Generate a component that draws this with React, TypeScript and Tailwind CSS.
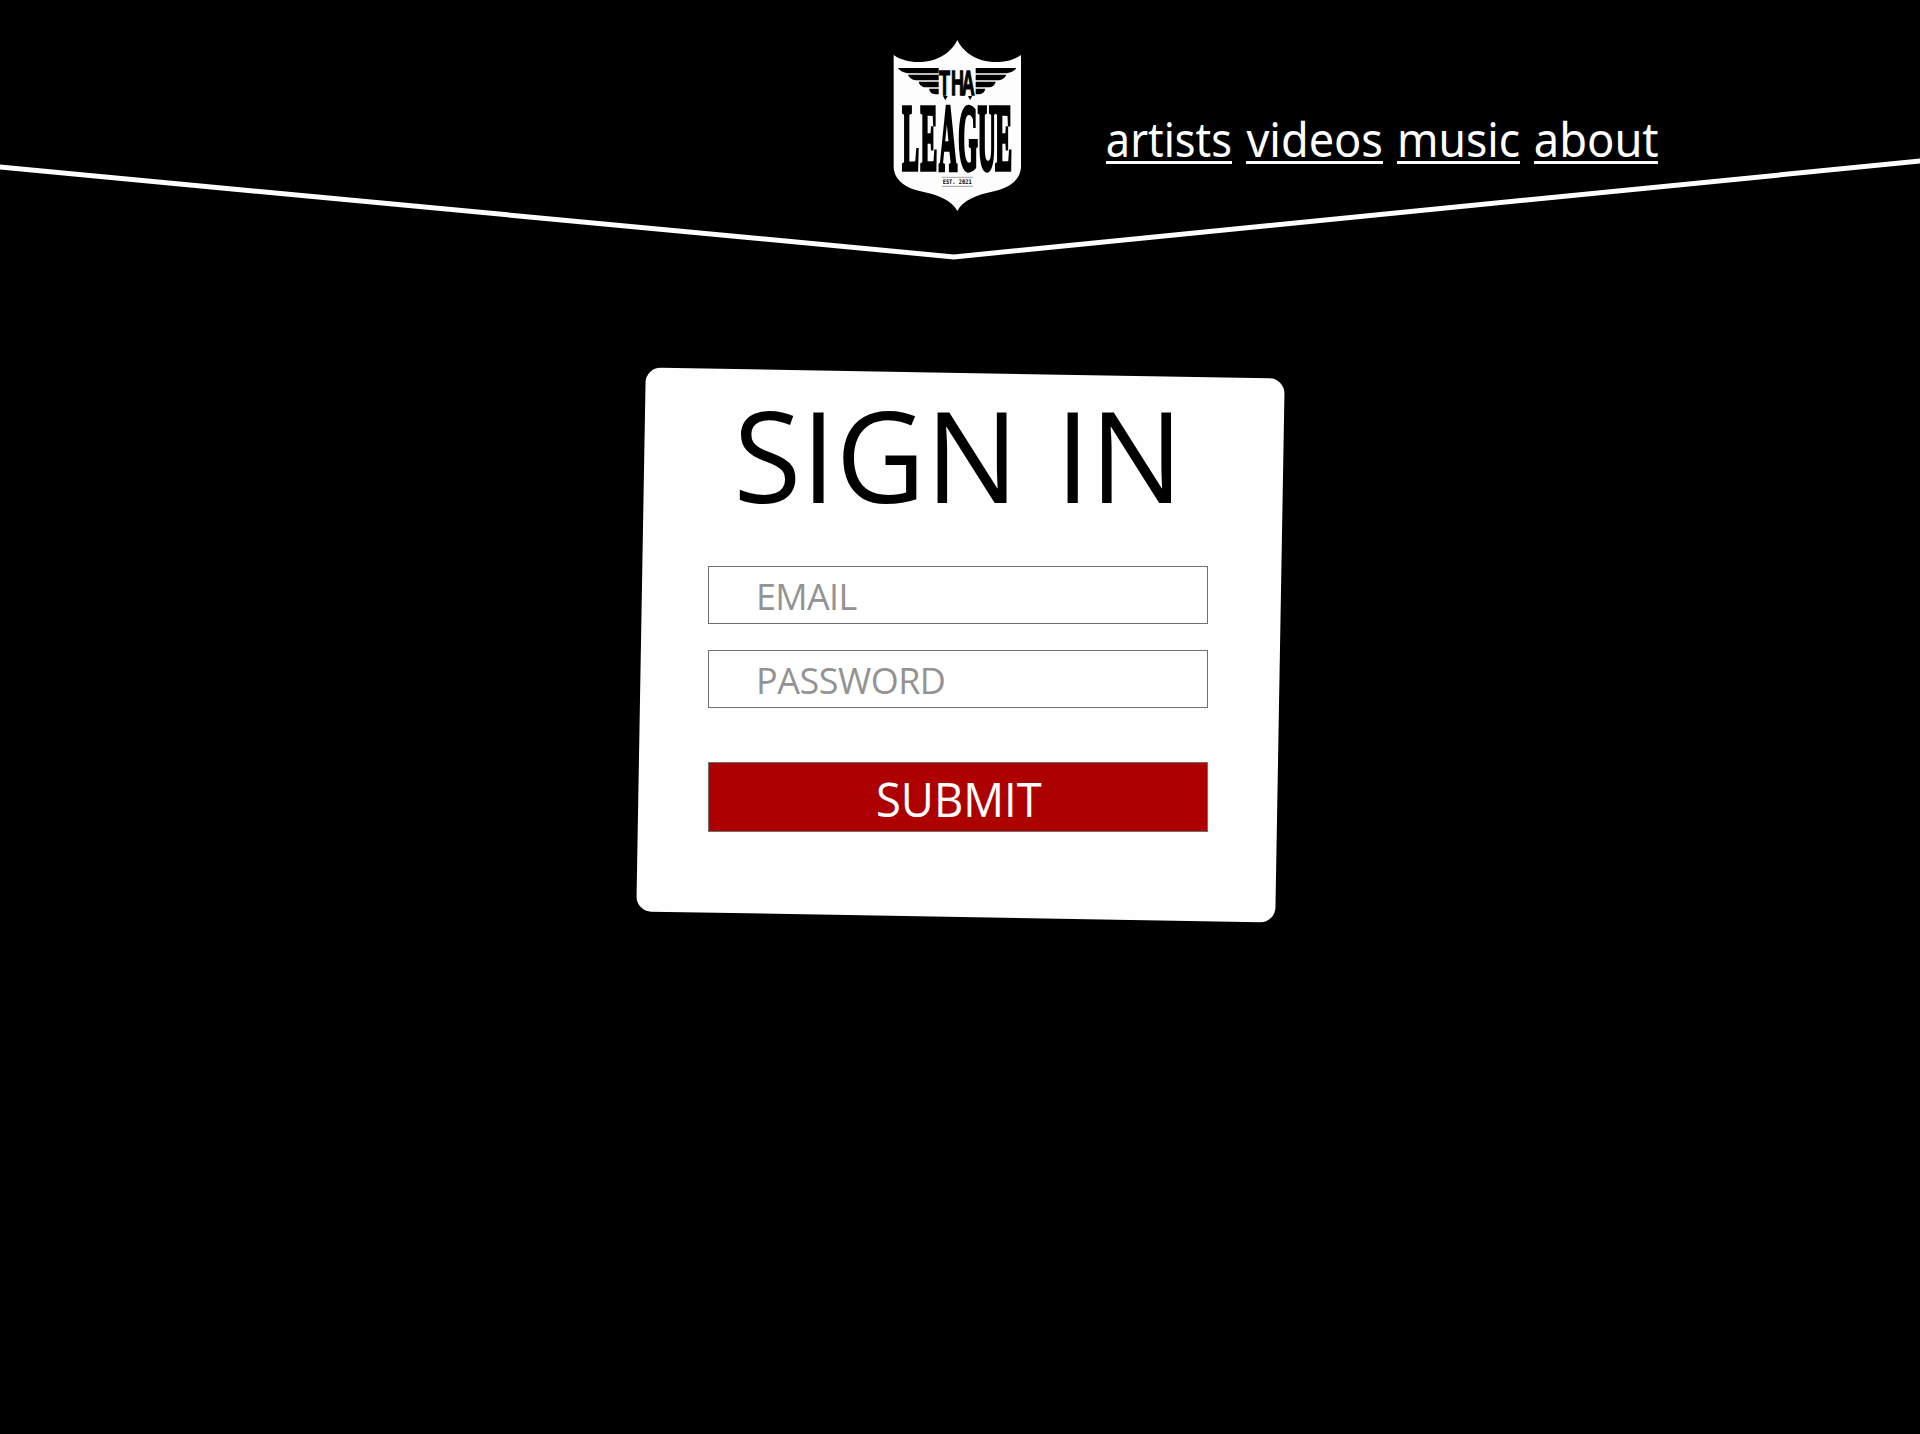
const LINKS = [
  { label: "artists", box: "w-[126px]", text: "scale-x-[0.902]" },
  { label: "videos", box: "ml-[14px] w-[137px]", text: "scale-x-[0.939]" },
  { label: "music", box: "ml-[14px] w-[123px]", text: "scale-x-[0.925]" },
  { label: "about", box: "ml-[14px] w-[124px]", text: "scale-x-[0.943]" },
];

function Wing() {
  return (
    <g fill="#000">
      <path d="M54 114H176V130H90C76 130 60 124 54 114Z" />
      <path d="M84 134H176V151H112C98 151 88 144 84 134Z" />
      <path d="M116 155H176V172H138C126 172 118 165 116 155Z" />
      <path d="M147 176H176V193H166C155 192 149 186 147 176Z" />
    </g>
  );
}

function Logo() {
  return (
    <svg className="h-[190px] w-[160px]" viewBox="0 0 480 570" role="img" aria-label="Tha League">
      <path
        fill="#fdfdfd"
        d="M232 30C216 64 176 96 116 96C84 96 58 88 41 75V412C43 450 76 474 122 484C174 494 216 512 232 543C248 512 290 494 342 484C388 474 421 450 423 412V75C406 88 380 96 348 96C288 96 248 64 232 30Z"
      />
      <Wing />
      <g transform="translate(463 0) scale(-1 1)">
        <Wing />
      </g>
      <g fill="#000" stroke="#000" fontWeight="700">
        <text transform="translate(180 196) scale(0.5 1)" x="-6 66 130" fontFamily="'Liberation Sans', sans-serif" fontSize="108" strokeWidth="4">
          THA
        </text>
        <text
          transform="translate(0 416) scale(0.272 1)"
          x="246 446 650 862 1078 1272"
          fontFamily="'Liberation Serif', serif"
          fontSize="277"
          strokeWidth="16"
        >
          LEAGUE
        </text>
      </g>
      <path fill="#000" d="M189 198H203L196 211ZM264 198H277L270 210Z" />
      <path d="M186 442H279M186 469H279" stroke="#777" strokeWidth="2" />
      <text
        x="188"
        y="463"
        textLength="87"
        lengthAdjust="spacingAndGlyphs"
        fontFamily="'DejaVu Sans Mono', monospace"
        fontWeight="700"
        fontSize="19"
      >
        EST. 2021
      </text>
    </svg>
  );
}

export default function App() {
  return (
    <div className="flex min-h-[1434px] w-full flex-col overflow-hidden bg-black font-['Open_Sans',sans-serif]">
      <header className="relative flex h-[260px] shrink-0 items-start pl-[880px]">
        <svg className="absolute inset-0 h-[270px] w-[1920px]" viewBox="0 0 1920 270" fill="none" aria-hidden="true">
          <path d="M-10 166.1L954 256.9L1930 160" stroke="#fff" strokeWidth="5" />
        </svg>
        <div className="relative mt-[30px] w-[160px]">
          <Logo />
        </div>
        <nav className="relative mt-[107px] ml-[66px] flex font-['Noto_Sans',sans-serif] text-[48px] leading-[64px] text-white">
          {LINKS.map((l) => (
            <a key={l.label} href="#" className={"flex h-[57px] justify-center border-b-[3px] border-white " + l.box}>
              <span className={"block " + l.text}>{l.label}</span>
            </a>
          ))}
        </nav>
      </header>

      <main className="mt-[112px] grid h-[545px] w-[640px] shrink-0 self-center">
        <div className="col-start-1 row-start-1 mx-[0.5px] mt-px rotate-1 rounded-[15px] bg-[#fefefe]" />
        <form className="relative col-start-1 row-start-1 flex flex-col pt-[18px] pr-[72px] pl-[68px]">
          <h1 className="flex h-[128px] justify-center text-[126px] leading-[128px] whitespace-nowrap text-black">
            <span className="block scale-x-[0.98] [word-spacing:5px]">SIGN IN</span>
          </h1>
          <input
            type="email"
            placeholder="EMAIL"
            className="mt-[48px] h-[58px] w-[500px] border border-[#707070] bg-white pt-[2px] pl-[47px] text-[36px] tracking-[-0.7px] placeholder:text-[#939393]"
          />
          <input
            type="password"
            placeholder="PASSWORD"
            className="mt-[26px] h-[58px] w-[500px] border border-[#707070] bg-white pt-[2px] pl-[47px] text-[36px] tracking-[-0.5px] placeholder:text-[#939393]"
          />
          <button
            type="button"
            className="mt-[54px] flex h-[70px] w-[500px] items-center justify-center border border-[#707070] bg-[#ad0000] pt-[3px] pl-[2px] text-[47px] leading-[64px] text-white"
          >
            <span className="block scale-x-[0.966]">SUBMIT</span>
          </button>
        </form>
      </main>
    </div>
  );
}
